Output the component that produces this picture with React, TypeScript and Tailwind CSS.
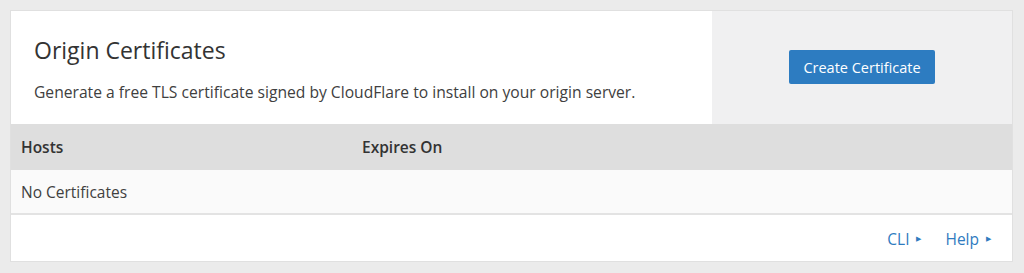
export default function App() {
  return (
    <div
      className="min-h-[273px] bg-[#ebebeb] pt-[10px] pl-[10px] text-[#333]"
      style={{ fontFamily: '"Open Sans", "Noto Sans", sans-serif' }}
    >
      <div className="w-[1003px] border border-[#e0e0e0] bg-white">
        <div className="flex h-[113px]">
          <div className="w-[701px] bg-white pl-[23px] pt-[23px]">
            <h1 className="text-[23px] leading-[32px] text-[#333]">Origin Certificates</h1>
            <p className="mt-[14px] text-[15.65px] leading-[24px] text-[#404040]">
              Generate a free TLS certificate signed by CloudFlare to install on your origin server.
            </p>
          </div>
          <div className="flex flex-1 items-start justify-center bg-[#f0f0f1] pt-[39px]">
            <button className="h-[34px] w-[146px] rounded-[2px] bg-[#2d7cc1] pt-px text-[14.5px] text-white">
              Create Certificate
            </button>
          </div>
        </div>
        <div className="flex h-[46px] items-center bg-[#dedede] pt-[2px] text-[15.5px] font-semibold text-[#333]">
          <div className="w-[351px] pl-[10px]">Hosts</div>
          <div>Expires On</div>
        </div>
        <div className="flex h-[45px] items-center border-b-2 border-[#e3e3e3] bg-[#fafafa] pt-[3px] pl-[10px] text-[15.5px] text-[#404040]">
          No Certificates
        </div>
        <div className="flex h-[46px] items-center justify-end gap-[24px] pt-[3px] pr-[21px] text-[15.5px] text-[#2f7bbf]">
          <a href="#" className="flex items-center gap-[7px]">
            CLI <span className="text-[7px]">▶</span>
          </a>
          <a href="#" className="flex items-center gap-[7px]">
            Help <span className="text-[7px]">▶</span>
          </a>
        </div>
      </div>
    </div>
  );
}
